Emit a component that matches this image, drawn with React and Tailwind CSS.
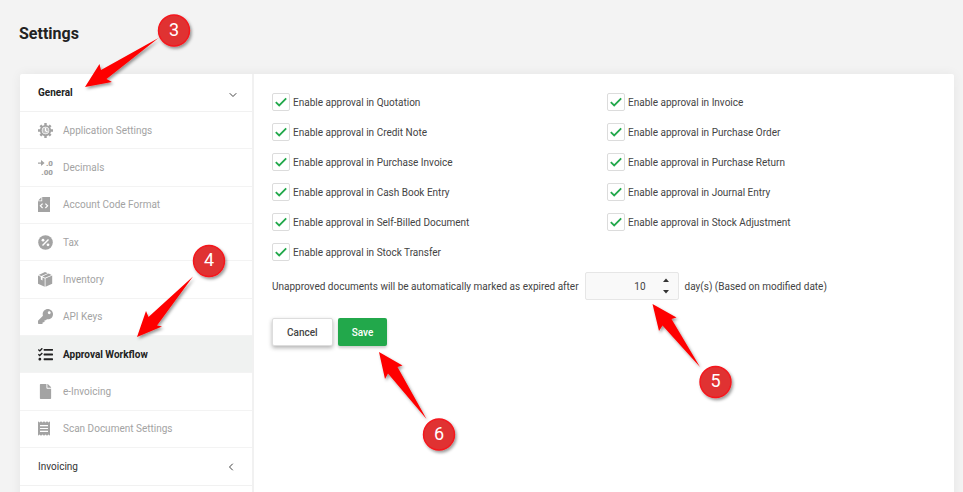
import { useState } from 'react';
import { FaKey, FaTasks, FaFile } from 'react-icons/fa';
import { FiChevronDown, FiChevronLeft } from 'react-icons/fi';

const GearClockIcon = ({ className }) => (
    <svg viewBox="0 0 16 16" className={className} fill="none" stroke="currentColor">
        <path d="M8 0V16M0 8H16M2.5 2.5 13.5 13.5M2.5 13.5 13.5 2.5" strokeWidth="2.6" />
        <circle cx="8" cy="8" r="6" fill="currentColor" stroke="none" />
        <circle cx="8" cy="8" r="3.7" fill="#fff" stroke="#fff" strokeWidth="0.6" />
        <circle cx="8" cy="8" r="3.2" fill="currentColor" stroke="none" opacity="0.7" />
        <path d="M8 5.4V8.3L10.2 9.6" stroke="#fff" strokeWidth="1.2" />
    </svg>
);

const DecimalsIcon = ({ className }) => (
    <svg viewBox="0 0 15 15" className={`${className} overflow-visible`} fill="currentColor" fontSize="8" fontWeight="900">
        <path d="M0 2.4h3V.1L6.6 3.1 3 6.1V3.8H0z" />
        <text x="15" y="5.8" textAnchor="end">.0</text>
        <text x="15" y="14.8" textAnchor="end">.00</text>
    </svg>
);

const FileCodeIcon = ({ className }) => (
    <svg viewBox="0 0 12 15" className={className} fill="currentColor">
        <path d="M4.2 0H12V15H0V4.2H4.2zM3.4 .2V3.4H.2z" />
        <path d="M4.6 6.6 2.4 8.8 4.6 11M7.4 6.6 9.6 8.8 7.4 11" fill="none" stroke="#fff" strokeWidth="1.2" />
    </svg>
);

const TaxIcon = ({ className }) => (
    <svg viewBox="0 0 15 15" className={className}>
        <circle cx="7.5" cy="7.5" r="7.3" fill="currentColor" />
        <path d="M4.5 10.5 10.5 4.5" stroke="#fff" strokeWidth="1.4" />
        <circle cx="5" cy="5.2" r="1.4" fill="#fff" />
        <circle cx="10" cy="9.8" r="1.4" fill="#fff" />
    </svg>
);

const BoxIcon = ({ className }) => (
    <svg viewBox="0 0 15 15" className={className} fill="currentColor">
        <path d="M7 0 9.8 1.2 3.4 4 .7 2.9zM10.7 1.6 13.6 2.9 7.1 5.7 4.4 4.5z" />
        <path d="M0 3.6 2.8 4.8V7.6L4.5 8.4V5.5L6.7 6.4v8.3L0 11.8zM14.2 3.6V11.8L7.5 14.7V6.4z" />
    </svg>
);

const ReceiptIcon = ({ className }) => (
    <svg viewBox="0 0 12 15" className={className}>
        <path
            d="M0 .3 1.5 1.5 3 .3 4.5 1.5 6 .3 7.5 1.5 9 .3 10.5 1.5 12 .3V14.7L10.5 13.5 9 14.7 7.5 13.5 6 14.7 4.5 13.5 3 14.7 1.5 13.5 0 14.7z"
            fill="currentColor"
        />
        <path d="M2 4.6H10M2 7.5H10M2 10.4H10" stroke="#fff" strokeWidth="1.1" />
    </svg>
);

const MENU = [
    { name: 'Application Settings', Icon: GearClockIcon },
    { name: 'Decimals', Icon: DecimalsIcon },
    { name: 'Account Code Format', Icon: FileCodeIcon },
    { name: 'Tax', Icon: TaxIcon },
    { name: 'Inventory', Icon: BoxIcon },
    { name: 'API Keys', Icon: FaKey },
    { name: 'Approval Workflow', Icon: FaTasks },
    { name: 'e-Invoicing', Icon: FaFile },
    { name: 'Scan Document Settings', Icon: ReceiptIcon },
];

const APPROVALS = [
    'Quotation',
    'Invoice',
    'Credit Note',
    'Purchase Order',
    'Purchase Invoice',
    'Purchase Return',
    'Cash Book Entry',
    'Journal Entry',
    'Self-Billed Document',
    'Stock Adjustment',
    'Stock Transfer',
];

function Sidebar({ active, onSelect }) {
    return (
        <nav className="w-[234px] shrink-0 border-r-2 border-[#f1f1f1]">
            <button className="flex h-[38px] w-full items-center justify-between border-b border-[#f1f1f1] pr-[13px] pl-[18px] font-bold text-[#222]">
                General
                <FiChevronDown className="mt-1 h-3 w-3 text-[#444]" />
            </button>
            <div className="grid min-h-[336px] auto-rows-fr">
                {MENU.map(({ name, Icon }) => (
                    <a
                        key={name}
                        href="#"
                        onClick={() => onSelect(name)}
                        className={`flex items-center gap-2.5 border-b border-[#f3f3f3] pl-[18px] ${name === active
                            ? 'bg-[#f0f2f1] font-bold text-[#222]'
                            : 'text-[#a3a3a3]'
                            }`}
                    >
                        <span className="w-[15px]">
                            <Icon className="h-[15px] w-auto" />
                        </span>
                        {name}
                    </a>
                ))}
            </div>
            <button className="flex h-[38px] w-full items-center justify-between border-b border-[#f1f1f1] pr-[15px] pl-[18px] text-[#333]">
                Invoicing
                <FiChevronLeft className="h-3 w-3 text-[#444]" />
            </button>
        </nav>
    );
}

function ApprovalCheckbox({ label }) {
    return (
        <label className="flex h-[18px] items-center gap-[3px]">
            <span className="grid h-[18px] w-[18px] shrink-0">
                <input
                    type="checkbox"
                    defaultChecked
                    className="peer col-start-1 row-start-1 h-[18px] w-[18px] appearance-none rounded-xs border border-[#dcdcdc] bg-white"
                />
                <svg
                    viewBox="0 0 18 18"
                    className="pointer-events-none invisible col-start-1 row-start-1 h-[18px] w-[18px] peer-checked:visible"
                    fill="none"
                    stroke="#22a84b"
                    strokeWidth="1.8"
                >
                    <path d="M3.8 9.2 7.2 12.5 14.2 5.4" />
                </svg>
            </span>
            Enable approval in {label}
        </label>
    );
}

// Numbered marker with an arrow running from its edge to the tip
function Callout({ number, cx, cy, tip, wingA, notchA, tail, notchB, wingB }) {
    return (
        <g>
            <polygon
                points={[tip, wingA, notchA, tail, notchB, wingB].join(' ')}
                fill="#fe0000"
                filter="url(#marker-shadow)"
            />
            <circle cx={cx} cy={cy} r="15.5" fill="#e03133" stroke="#f5161b" strokeWidth="1.4" filter="url(#marker-shadow)" />
            <text x={cx} y={cy + 5} textAnchor="middle" fontSize="18" fill="#fff">{number}</text>
        </g>
    );
}

function Callouts() {
    return (
        <svg width="963" height="492" className="pointer-events-none absolute top-0 left-0">
            <defs>
                <filter id="marker-shadow" x="-30%" y="-30%" width="160%" height="160%">
                    <feDropShadow dx="1.5" dy="2" stdDeviation="1.5" floodColor="#000" floodOpacity="0.4" />
                </filter>
            </defs>
            <Callout number={3} cx={174} cy={30.5} tip="85,87" wingA="99.5,64" notchA="101,70" tail="158.5,38" notchB="106.5,79" wingB="112,82" />
            <Callout number={4} cx={209} cy={261} tip="137,337" wingA="146,311" notchA="148.5,317" tail="193,276.5" notchB="157,325.5" wingB="162,326.5" />
            <Callout number={5} cx={715.5} cy={382} tip="652.5,304" wingA="676.5,317.5" notchA="671.5,319" tail="700,367" notchB="662.5,325.5" wingB="659,331" />
            <Callout number={6} cx={439} cy={434.5} tip="379,352" wingA="402.5,365.5" notchA="397.5,367" tail="426.5,419" notchB="388,373.5" wingB="385,379" />
        </svg>
    );
}

function App() {
    const [active, setActive] = useState('Approval Workflow');
    const [days, setDays] = useState(10);

    return (
        <div className="relative h-screen overflow-hidden bg-[#f3f3f3] font-[Roboto,sans-serif] text-[10px] text-[#444]">
            <h1 className="px-[19px] pt-6 text-base leading-5 font-bold text-[#222]">Settings</h1>
            <div className="mt-[30px] mr-[9px] ml-5 flex min-h-full rounded-xs bg-white shadow-[0_0_12px_rgba(0,0,0,0.06)]">
                <Sidebar active={active} onSelect={setActive} />
                <main className="flex-1 pt-[19px] pr-3 pl-[18px]">
                    <div className="grid grid-cols-2 gap-y-3">
                        {APPROVALS.map((label) => (
                            <ApprovalCheckbox key={label} label={label} />
                        ))}
                    </div>
                    <div className="mt-[11px] flex items-center gap-1.5">
                        <label htmlFor="expiry-days">Unapproved documents will be automatically marked as expired after</label>
                        <div className="flex h-7 w-[94px] items-center rounded-xs border border-[#e6e6e6] bg-[#f9f9f9] pr-2">
                            <input
                                id="expiry-days"
                                type="text"
                                value={days}
                                onChange={(e) => setDays(Number(e.target.value) || 0)}
                                className="w-0 flex-1 bg-transparent text-right outline-none"
                            />
                            <div className="ml-4 flex flex-col gap-2">
                                <button aria-label="Increase days" onClick={() => setDays(days + 1)}>
                                    <svg viewBox="0 0 8 4" className="h-1 w-2" fill="#333"><path d="M1 4 4 .5 7 4z" /></svg>
                                </button>
                                <button aria-label="Decrease days" onClick={() => setDays(days - 1)}>
                                    <svg viewBox="0 0 8 4" className="h-1 w-2" fill="#333"><path d="M1 0 4 3.5 7 0z" /></svg>
                                </button>
                            </div>
                        </div>
                        <span>day(s) (Based on modified date)</span>
                    </div>
                    <div className="mt-[18px] flex gap-[5px] font-medium">
                        <button className="h-7 rounded-xs border border-[#ddd] bg-white px-3.5 shadow-[0_2px_4px_rgba(0,0,0,0.3)]">Cancel</button>
                        <button className="h-7 rounded-xs bg-[#22a84b] px-3.5 text-white shadow-[0_2px_3px_rgba(0,0,0,0.2)]">Save</button>
                    </div>
                </main>
            </div>
            <Callouts />
        </div>
    );
}

export default App;
